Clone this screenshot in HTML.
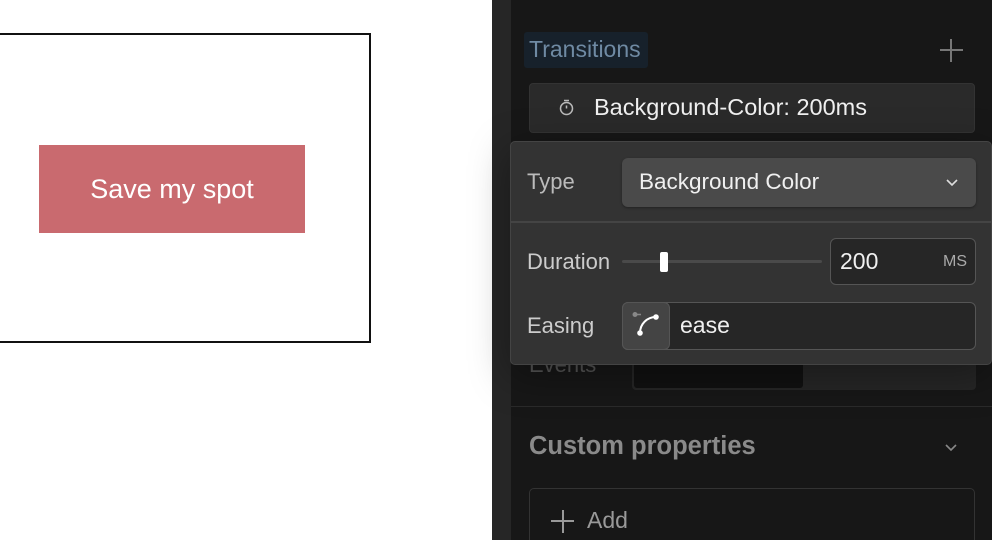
<!DOCTYPE html>
<html style="overflow:hidden"><head><style>
*{box-sizing:border-box;margin:0;padding:0}
html,body{width:992px;height:540px;overflow:hidden}
body{background:#fff;font-family:"Liberation Sans",sans-serif;position:relative}
.a{position:absolute;white-space:nowrap}
.t{color:#ddd;font-size:22px}
</style></head><body>
<div class="a" style="left:-4px;top:33px;width:375px;height:310px;border:2px solid #111"></div>
<div class="a" style="left:39px;top:145px;width:266px;height:88px;background:#c96a6f;color:#fff;font-size:27px;display:flex;align-items:center;justify-content:center">Save my spot</div>
<div class="a" style="left:492px;top:0;width:20px;height:540px;background:#262626"></div>
<div class="a" style="left:511px;top:0;width:481px;height:540px;background:#171717"></div>
<div class="a" style="left:524px;top:32px;width:124px;height:36px;background:#17212b;border-radius:3px"></div>
<div class="a" style="left:529px;top:36px;font-size:23px;color:#6f8aa3">Transitions</div>
<div class="a" style="left:940px;top:49px;width:23px;height:2px;background:#777"></div>
<div class="a" style="left:950px;top:39px;width:2px;height:23px;background:#777"></div>
<div class="a" style="left:529px;top:83px;width:446px;height:50px;background:#2a2a2a;border-radius:4px;border:1px solid #333"></div>
<svg class="a" style="left:558px;top:98px" width="17" height="18" viewBox="0 0 17 18"><circle cx="8.5" cy="10.5" r="6" fill="none" stroke="#bbb" stroke-width="1.5"/><path d="M6 2.5h5M8.5 10.5V7.5" stroke="#bbb" stroke-width="1.5"/></svg>
<div class="a" style="left:594px;top:94px;font-size:23.5px;color:#f0f0f0">Background-Color: 200ms</div>
<div class="a" style="left:529px;top:352px;font-size:22px;color:#555">Events</div>
<div class="a" style="left:632px;top:356px;width:344px;height:34px;background:#262626;border-radius:4px"></div>
<div class="a" style="left:634px;top:358px;width:169px;height:30px;background:#111;border-radius:3px"></div>
<div class="a" style="left:511px;top:406px;width:481px;height:1px;background:#2a2a2a"></div>
<div class="a" style="left:529px;top:432px;font-size:25.5px;font-weight:bold;color:#8a8a8a">Custom properties</div>
<svg class="a" style="left:944px;top:443px" width="14" height="10"><path d="M2 2l5 5 5-5" fill="none" stroke="#888" stroke-width="1.6"/></svg>
<div class="a" style="left:529px;top:488px;width:446px;height:70px;border:1px solid #333;border-radius:5px"></div>
<div class="a" style="left:551px;top:520px;width:23px;height:2px;background:#999"></div>
<div class="a" style="left:562px;top:510px;width:2px;height:23px;background:#999"></div>
<div class="a" style="left:587px;top:507px;font-size:23px;color:#999">Add</div>
<div class="a" style="left:510px;top:141px;width:482px;height:224px;background:#333;border:1px solid #444;border-radius:5px;box-shadow:0 10px 40px rgba(0,0,0,.35)"></div>
<div class="a t" style="left:527px;top:169px;color:#bbb">Type</div>
<div class="a" style="left:622px;top:158px;width:354px;height:49px;background:#4a4a4a;border-radius:6px;box-shadow:0 1px 2px #222"></div>
<div class="a" style="left:639px;top:169px;font-size:22.5px;color:#f0f0f0">Background Color</div>
<svg class="a" style="left:945px;top:178px" width="14" height="10"><path d="M2 2l5 5 5-5" fill="none" stroke="#ddd" stroke-width="1.6"/></svg>
<div class="a" style="left:511px;top:221px;width:481px;height:2px;background:#444"></div>
<div class="a t" style="left:527px;top:249px;color:#ccc">Duration</div>
<div class="a" style="left:622px;top:260px;width:200px;height:3px;background:#4a4a4a;border-radius:2px"></div>
<div class="a" style="left:660px;top:252px;width:8px;height:20px;background:#fff;border-radius:2px"></div>
<div class="a" style="left:830px;top:238px;width:146px;height:47px;background:#262626;border:1px solid #555;border-radius:6px"></div>
<div class="a" style="left:840px;top:248px;font-size:23px;color:#f0f0f0">200</div>
<div class="a" style="left:943px;top:253px;font-size:16px;color:#aaa">MS</div>
<div class="a t" style="left:527px;top:313px;color:#ccc">Easing</div>
<div class="a" style="left:622px;top:302px;width:354px;height:48px;background:#262626;border:1px solid #555;border-radius:6px"></div>
<div class="a" style="left:622px;top:302px;width:48px;height:48px;background:#444;border:1px solid #555;border-radius:6px"></div>
<svg class="a" style="left:630px;top:310px" width="34" height="32" viewBox="0 0 34 32"><path d="M5 4.5h6" stroke="#888" stroke-width="1.5"/><circle cx="5" cy="4.5" r="2.5" fill="#888"/><path d="M10 23 C10 14 17 7 26 7" fill="none" stroke="#fff" stroke-width="2"/><circle cx="10" cy="23" r="2.8" fill="#fff"/><circle cx="26" cy="7" r="2.8" fill="#fff"/></svg>
<div class="a" style="left:680px;top:312px;font-size:23px;color:#f0f0f0">ease</div>
</body></html>
